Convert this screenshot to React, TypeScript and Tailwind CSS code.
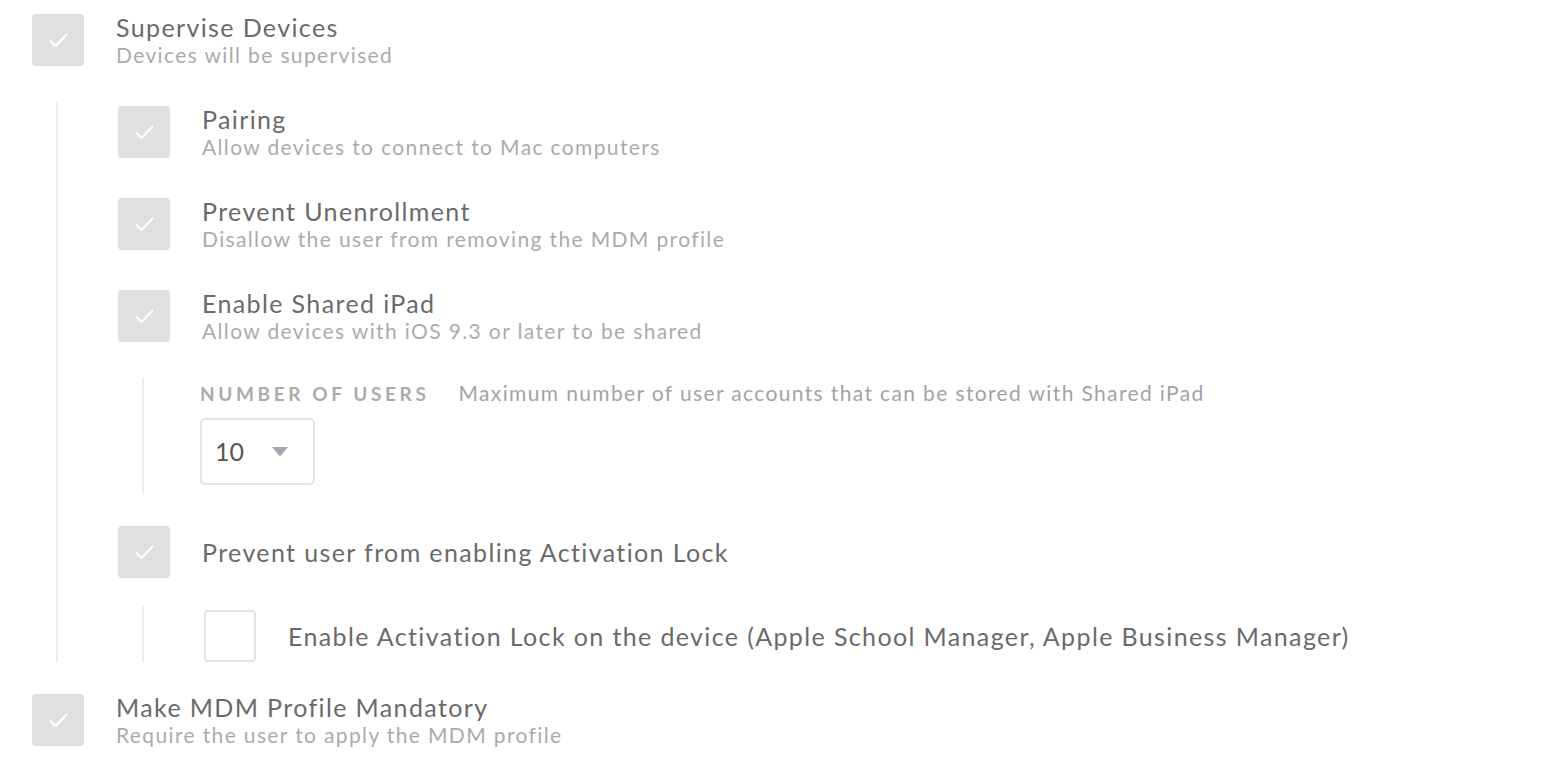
import React from 'react';

interface OptionProps {
  checked?: boolean;
  title: string;
  subtitle?: string;
}

function Checkbox({ checked }: { checked?: boolean }) {
  if (!checked) {
    return <div className="w-[52px] h-[52px] shrink-0 rounded-[4px] border-2 border-[#e2e2e2] bg-white" />;
  }
  return (
    <div className="w-[52px] h-[52px] shrink-0 rounded-[4px] bg-[#e0e0e0] flex items-center justify-center">
      <svg width="19" height="15" viewBox="0 0 19 15" fill="none">
        <path d="M1.5 8 L6.5 13 L17.5 1.5" stroke="#ffffff" strokeWidth="2" strokeLinecap="round" strokeLinejoin="round" />
      </svg>
    </div>
  );
}

function Option({ checked, title, subtitle }: OptionProps) {
  return (
    <div className={`flex gap-8 h-[52px] ${subtitle ? 'items-start' : 'items-center'}`}>
      <Checkbox checked={checked} />
      <div>
        <div className="text-[25px] leading-[26px] tracking-[0.055em] text-[#6a6a6a] whitespace-nowrap">{title}</div>
        {subtitle && (
          <div className="mt-[2px] text-[21px] leading-[26px] tracking-[0.065em] text-[#ababab] whitespace-nowrap">
            {subtitle}
          </div>
        )}
      </div>
    </div>
  );
}

export default function App() {
  return (
    <div className="min-h-screen bg-white pl-8 pt-[14px]" style={{ fontFamily: 'Lato, "Open Sans", sans-serif' }}>
      <Option checked title="Supervise Devices" subtitle="Devices will be supervised" />

      {/* children of supervise */}
      <div className="ml-[24px] mt-9 border-l-2 border-[#eceef1] pl-[60px] pt-1">
        <div className="flex flex-col gap-10">
          <Option checked title="Pairing" subtitle="Allow devices to connect to Mac computers" />
          <Option checked title="Prevent Unenrollment" subtitle="Disallow the user from removing the MDM profile" />
          <Option checked title="Enable Shared iPad" subtitle="Allow devices with iOS 9.3 or later to be shared" />
        </div>

        {/* shared ipad settings */}
        <div className="ml-[24px] mt-9 border-l-2 border-[#eceef1] pl-[56px] pt-[3px] pb-2">
          <div className="flex items-baseline gap-[29px]">
            <span className="text-[19px] leading-[24px] font-bold tracking-[0.19em] text-[#ababab]">NUMBER OF USERS</span>
            <span className="text-[21px] leading-[24px] tracking-[0.065em] text-[#a3a3a3] whitespace-nowrap">
              Maximum number of user accounts that can be stored with Shared iPad
            </span>
          </div>
          <div className="mt-[12px] w-[115px] h-[67px] rounded-[5px] border-2 border-[#e4e4e4] flex items-center pl-[13px] gap-[28px]">
            <span className="text-[25px] text-[#555555]">10</span>
            <svg width="16" height="10" viewBox="0 0 16 10">
              <path d="M0 0 H16 L8 9.5 Z" fill="#a2a6ae" />
            </svg>
          </div>
        </div>

        <div className="mt-[33px]">
          <Option checked title="Prevent user from enabling Activation Lock" />
        </div>
        <div className="ml-[24px] mt-7 border-l-2 border-[#eceef1] pl-[60px] pt-1">
          <Option title="Enable Activation Lock on the device (Apple School Manager, Apple Business Manager)" />
        </div>
      </div>

      <div className="mt-8">
        <Option checked title="Make MDM Profile Mandatory" subtitle="Require the user to apply the MDM profile" />
      </div>
    </div>
  );
}
